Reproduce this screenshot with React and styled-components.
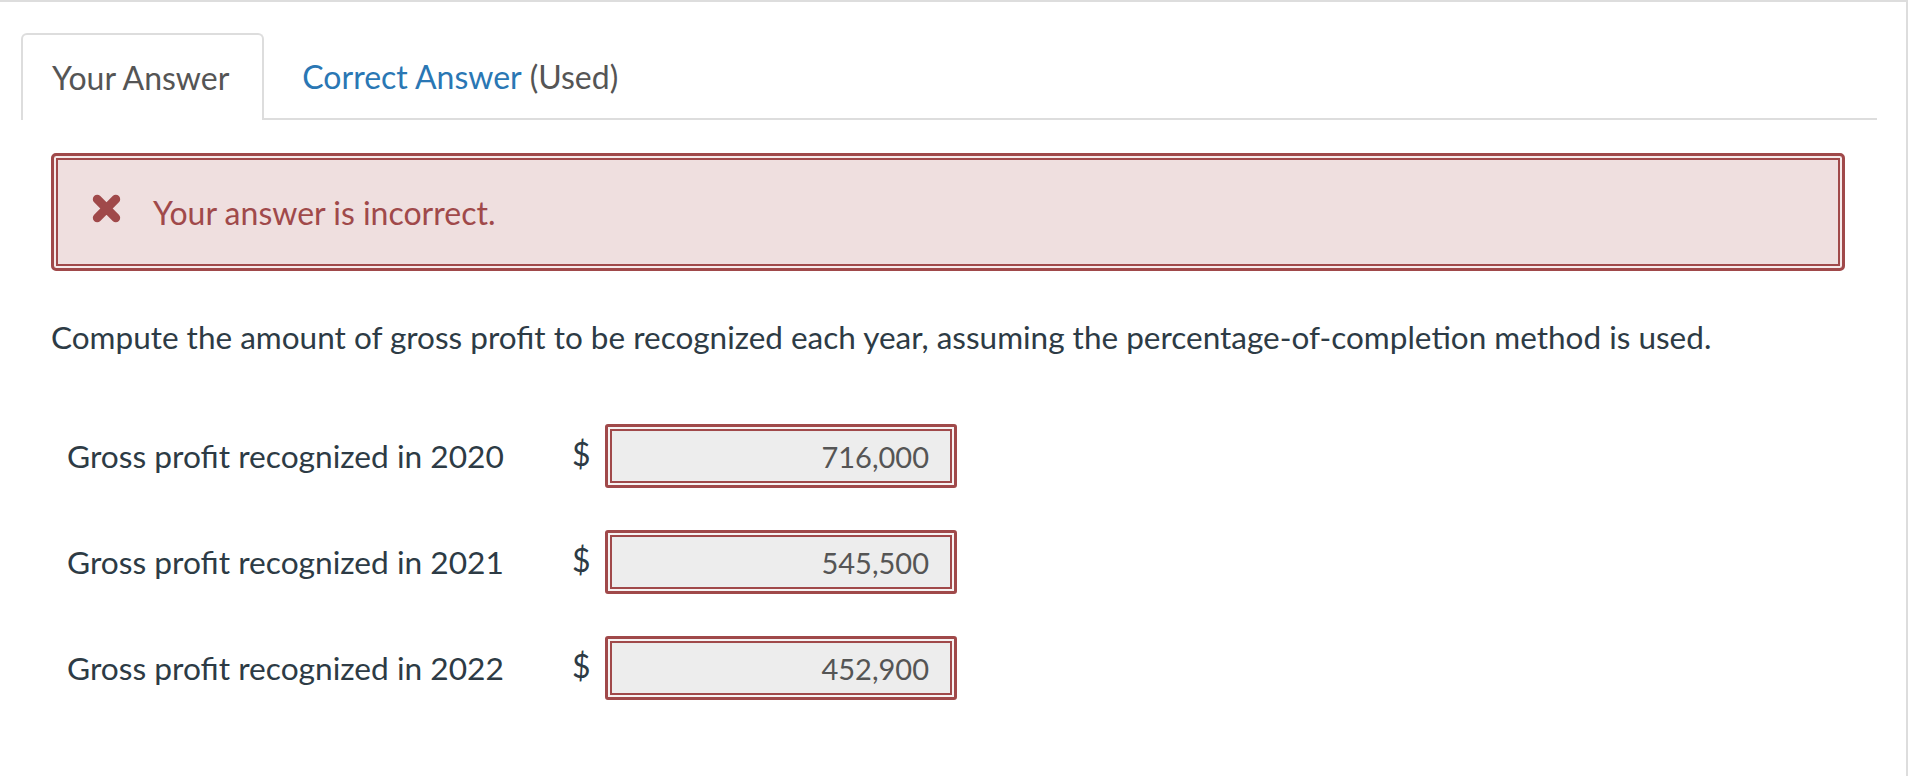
import React from 'react';
import styled, { createGlobalStyle } from 'styled-components';

const GlobalStyle = createGlobalStyle`
    html, body {
        margin: 0;
        padding: 0;
        background: #fff;
    }
    body {
        font-family: Lato, "Open Sans", "Liberation Sans", sans-serif;
        color: #2d3b45;
    }
`;

const Frame = styled.div`
    box-sizing: border-box;
    min-height: 100vh;
    border-top: 2px solid #dddddd;
    border-right: 2px solid #dddddd;
    padding: 31px 0 40px 21px;
`;

const TabList = styled.div`
    display: flex;
    align-items: flex-start;
    width: 1856px;
    height: 85px;
    border-bottom: 2px solid #dddddd;
`;

const Tab = styled.div`
    box-sizing: border-box;
    display: flex;
    align-items: center;
    height: 87px;
    padding: ${({ $active }) => ($active ? '0 33px 0 29px' : '0 0 0 38px')};
    font-size: 32px;
    color: #555;
    background: ${({ $active }) => ($active ? '#fff' : 'transparent')};
    border: ${({ $active }) => ($active ? '2px solid #dddddd' : 'none')};
    border-bottom: none;
    border-radius: 6px 6px 0 0;
`;

const TabLink = styled.span`
    color: #2a77b4;
    margin-right: 8px;
`;

const Content = styled.div`
    padding-left: 30px;
    width: 1794px;
`;

const Alert = styled.div`
    box-sizing: border-box;
    margin-top: 33px;
    height: 118px;
    display: flex;
    align-items: center;
    padding-left: 37px;
    background: #efdfdf;
    border: 3px solid #a0494a;
    border-radius: 5px;
    box-shadow: inset 0 0 0 2px #f6eaea, inset 0 0 0 4px #a0494a;
    color: #a0494a;
    font-size: 32px;
`;

const AlertIcon = styled.svg`
    width: 31px;
    height: 31px;
    margin-right: 31px;
    margin-top: -8px;
    flex-shrink: 0;
`;

const Question = styled.p`
    margin: 45px 0 0;
    font-size: 31.5px;
    line-height: 43px;
    color: #2d3b45;
`;

const Rows = styled.div`
    margin-top: 65px;
    display: flex;
    flex-direction: column;
    gap: 42px;
`;

const Row = styled.div`
    display: flex;
    align-items: center;
    height: 64px;
    padding-left: 16px;
`;

const Label = styled.span`
    width: 505px;
    font-size: 31.7px;
    color: #2d3b45;
`;

const Dollar = styled.span`
    width: 33px;
    font-size: 32px;
    color: #2d3b45;
    margin-top: -6px;
`;

const AnswerBox = styled.div`
    box-sizing: border-box;
    width: 352px;
    height: 64px;
    display: flex;
    align-items: center;
    justify-content: flex-end;
    padding-right: 25px;
    background: #ededed;
    border: 3px solid #a0494a;
    border-radius: 3px;
    box-shadow: inset 0 0 0 2px #f7f3f3, inset 0 0 0 4px #a0494a, inset 0 6px 3px -3px rgba(0, 0, 0, 0.08);
    font-size: 29px;
    color: #555;
`;

const answers = [
    { year: 2020, value: '716,000' },
    { year: 2021, value: '545,500' },
    { year: 2022, value: '452,900' },
];

const CrossIcon = () => (
    <AlertIcon viewBox="0 0 30 30">
        <path
            d="M6 6 L24 24 M24 6 L6 24"
            stroke="#a0494a"
            strokeWidth="8.5"
            strokeLinecap="round"
            fill="none"
        />
    </AlertIcon>
);

const App = () => (
    <>
        <GlobalStyle />
        <Frame>
            <TabList>
                <Tab $active>Your Answer</Tab>
                <Tab>
                    <TabLink>Correct Answer</TabLink>(Used)
                </Tab>
            </TabList>
            <Content>
                <Alert>
                    <CrossIcon />
                    Your answer is incorrect.
                </Alert>
                <Question>
                    Compute the amount of gross profit to be recognized each year, assuming the
                    percentage-of-completion method is used.
                </Question>
                <Rows>
                    {answers.map((a) => (
                        <Row key={a.year}>
                            <Label>Gross profit recognized in {a.year}</Label>
                            <Dollar>$</Dollar>
                            <AnswerBox>{a.value}</AnswerBox>
                        </Row>
                    ))}
                </Rows>
            </Content>
        </Frame>
    </>
);

export default App;
